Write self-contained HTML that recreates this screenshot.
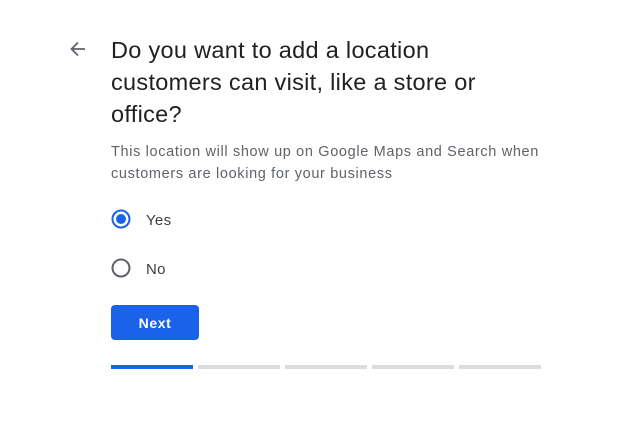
<!DOCTYPE html>
<html><head><style>
body{margin:0;width:621px;height:432px;background:#fff;font-family:"Liberation Sans",Arial,sans-serif;position:relative;overflow:hidden}
.t{position:absolute;left:111px;top:34px;font-size:23.5px;line-height:32px;color:#202124;width:480px;letter-spacing:.3px;white-space:nowrap}
.s{position:absolute;left:111px;top:141px;font-size:14.5px;line-height:22px;color:#5f6368;width:470px;letter-spacing:.65px;white-space:nowrap}
.r{position:absolute;left:111px;width:20px;height:20px}
.l{position:absolute;left:146px;font-size:15px;color:#3c4043;letter-spacing:.3px}
.b{position:absolute;left:111px;top:305px;width:88px;height:35px;background:#1a62e8;border-radius:4px;color:#fff;font-size:14px;font-weight:bold;letter-spacing:.6px;text-align:center;line-height:36px}
.p{position:absolute;top:365px;height:4px;width:82px;background:#dadce0}
</style></head><body>
<svg style="position:absolute;left:68px;top:39px" width="20" height="20" viewBox="0 0 20 20"><path d="M17 10H4M10 3.5L3.5 10L10 16.5" stroke="#5f6368" stroke-width="1.8" fill="none"/></svg>
<div class="t">Do you want to add a location<br>customers can visit, like a store or<br>office?</div>
<div class="s">This location will show up on Google Maps and Search when<br>customers are looking for your business</div>
<svg class="r" style="top:209px" viewBox="0 0 20 20"><circle cx="10" cy="10" r="8.5" stroke="#1a62e8" stroke-width="2" fill="none"/><circle cx="10" cy="10" r="5" fill="#1a62e8"/></svg>
<div class="l" style="top:212px">Yes</div>
<svg class="r" style="top:258px" viewBox="0 0 20 20"><circle cx="10" cy="10" r="8.5" stroke="#5f6368" stroke-width="2" fill="none"/></svg>
<div class="l" style="top:261px">No</div>
<div class="b">Next</div>
<div class="p" style="left:111px;background:#1a62e8"></div>
<div class="p" style="left:198px"></div>
<div class="p" style="left:285px"></div>
<div class="p" style="left:372px"></div>
<div class="p" style="left:459px"></div>
</body></html>
